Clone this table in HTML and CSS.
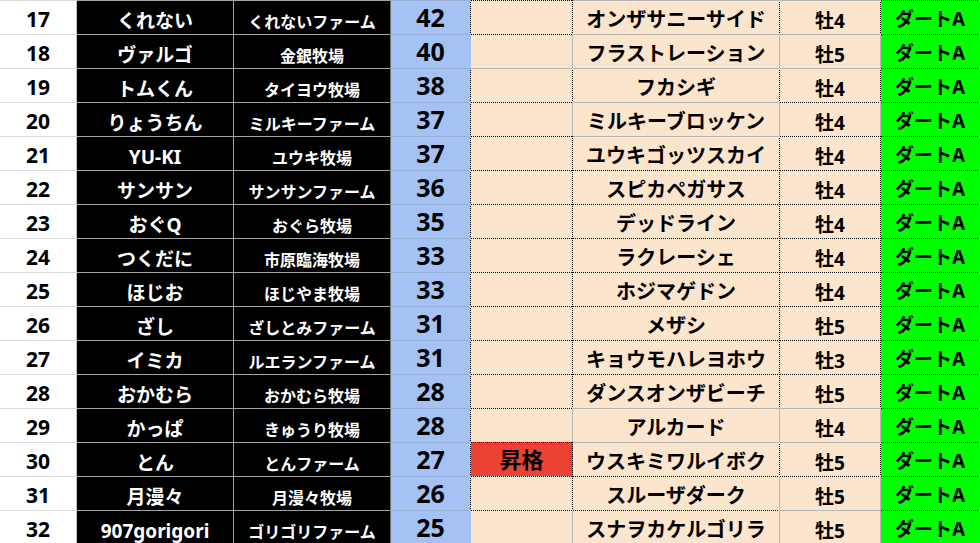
FILE: index.html
```html
<!DOCTYPE html>
<html lang="ja">
<head>
<meta charset="utf-8">
<title>ランキング</title>
<link rel="stylesheet" href="styles.css">
</head>
<body>
<div class="sheet">
  <div class="c num">17</div><div class="c name">くれない</div><div class="c farm">くれないファーム</div><div class="c score dr">42</div><div class="c blank dt dr"></div><div class="c horse dr">オンザサニーサイド</div><div class="c sex dr">牡4</div><div class="c grade dt">ダートA</div>
  <div class="c num">18</div><div class="c name">ヴァルゴ</div><div class="c farm">金銀牧場</div><div class="c score">40</div><div class="c blank dt"></div><div class="c horse">フラストレーション</div><div class="c sex">牡5</div><div class="c grade dt">ダートA</div>
  <div class="c num">19</div><div class="c name">トムくん</div><div class="c farm">タイヨウ牧場</div><div class="c score dr">38</div><div class="c blank dr"></div><div class="c horse dr">フカシギ</div><div class="c sex dr">牡4</div><div class="c grade dt">ダートA</div>
  <div class="c num">20</div><div class="c name">りょうちん</div><div class="c farm">ミルキーファーム</div><div class="c score dr">37</div><div class="c blank dt"></div><div class="c horse">ミルキーブロッケン</div><div class="c sex dt">牡4</div><div class="c grade dt">ダートA</div>
  <div class="c num">21</div><div class="c name">YU-KI</div><div class="c farm">ユウキ牧場</div><div class="c score dr">37</div><div class="c blank dt dr"></div><div class="c horse dr">ユウキゴッツスカイ</div><div class="c sex dt dr">牡4</div><div class="c grade dt">ダートA</div>
  <div class="c num">22</div><div class="c name">サンサン</div><div class="c farm">サンサンファーム</div><div class="c score dr">36</div><div class="c blank dt dr"></div><div class="c horse dt dr">スピカペガサス</div><div class="c sex dt dr">牡4</div><div class="c grade dt">ダートA</div>
  <div class="c num">23</div><div class="c name">おぐQ</div><div class="c farm">おぐら牧場</div><div class="c score dr">35</div><div class="c blank dt dr"></div><div class="c horse dt dr">デッドライン</div><div class="c sex dt dr">牡4</div><div class="c grade dt">ダートA</div>
  <div class="c num">24</div><div class="c name">つくだに</div><div class="c farm">市原臨海牧場</div><div class="c score dr">33</div><div class="c blank dt dr"></div><div class="c horse dt dr">ラクレーシェ</div><div class="c sex dt dr">牡4</div><div class="c grade dt">ダートA</div>
  <div class="c num">25</div><div class="c name">ほじお</div><div class="c farm">ほじやま牧場</div><div class="c score dr">33</div><div class="c blank dt dr"></div><div class="c horse dt dr">ホジマゲドン</div><div class="c sex dt dr">牡4</div><div class="c grade dt">ダートA</div>
  <div class="c num">26</div><div class="c name">ざし</div><div class="c farm">ざしとみファーム</div><div class="c score dr">31</div><div class="c blank dt dr"></div><div class="c horse dt dr">メザシ</div><div class="c sex dt dr">牡5</div><div class="c grade dt">ダートA</div>
  <div class="c num">27</div><div class="c name">イミカ</div><div class="c farm">ルエランファーム</div><div class="c score dr">31</div><div class="c blank dt dr"></div><div class="c horse dt dr">キョウモハレヨホウ</div><div class="c sex dt dr">牡3</div><div class="c grade dt">ダートA</div>
  <div class="c num">28</div><div class="c name">おかむら</div><div class="c farm">おかむら牧場</div><div class="c score dr">28</div><div class="c blank dt dr"></div><div class="c horse dt dr">ダンスオンザビーチ</div><div class="c sex dt dr">牡5</div><div class="c grade dt">ダートA</div>
  <div class="c num">29</div><div class="c name">かっぱ</div><div class="c farm">きゅうり牧場</div><div class="c score dr">28</div><div class="c blank dt"></div><div class="c horse">アルカード</div><div class="c sex">牡4</div><div class="c grade dt">ダートA</div>
  <div class="c num">30</div><div class="c name">とん</div><div class="c farm">とんファーム</div><div class="c score dr">27</div><div class="c blank promo dt dr">昇格</div><div class="c horse dr">ウスキミワルイボク</div><div class="c sex dr">牡5</div><div class="c grade dt">ダートA</div>
  <div class="c num">31</div><div class="c name">月漫々</div><div class="c farm">月漫々牧場</div><div class="c score dr">26</div><div class="c blank dt dr"></div><div class="c horse dt">スルーザダーク</div><div class="c sex dt">牡5</div><div class="c grade dt">ダートA</div>
  <div class="c num">32</div><div class="c name">907gorigori</div><div class="c farm">ゴリゴリファーム</div><div class="c score">25</div><div class="c blank dt"></div><div class="c horse dt">スナヲカケルゴリラ</div><div class="c sex">牡5</div><div class="c grade dt">ダートA</div>
</div>
</body>
</html>
```
FILE: styles.css
```css
html, body {
  margin: 0;
  padding: 0;
  background: #ffffff;
  overflow: hidden;
}

.sheet {
  display: grid;
  grid-template-columns: 77px 157px 157px 80px 102px 207px 101px 99px;
  grid-auto-rows: 34px;
  width: 980px;
  font-family: "Noto Sans", "Noto Sans CJK JP", sans-serif;
  font-weight: 700;
}

.c {
  --t: none;
  --r: none;
  box-sizing: border-box;
  display: flex;
  align-items: flex-end;
  justify-content: center;
  border-top: 1px solid #b7b7b7;
  border-right: 1px solid #b7b7b7;
  background-image: var(--t), var(--r);
  background-size: 2px 1px, 1px 2px;
  background-position: left top, right top;
  background-repeat: repeat-x, repeat-y;
  background-origin: border-box;
  line-height: 1;
  white-space: nowrap;
  overflow: hidden;
  color: #000;
}

.num {
  background-color: #fff;
  font-size: 21px;
  padding-bottom: 4px;
  border-top-color: #dcdcdc;
  border-right-color: #c6c6c6;
}

.name {
  background-color: #000;
  color: #fff;
  font-size: 19px;
  padding-bottom: 3px;
  border-top-color: #a3a3a3;
  border-right-color: #a3a3a3;
}

.farm {
  background-color: #000;
  color: #fff;
  font-size: 16px;
  padding-bottom: 4px;
  border-top-color: #a3a3a3;
  border-right-color: #6d6d6d;
}

.score {
  background-color: #a4c2f4;
  font-size: 25px;
  padding-bottom: 4px;
  border-top-color: #9aafd6;
  border-right-color: #a4c2f4;
}

.blank {
  background-color: #fce5cd;
  font-size: 22px;
  padding-bottom: 6px;
}

.promo {
  background-color: #ea4335;
}

.horse {
  background-color: #fce5cd;
  font-size: 20px;
  padding-bottom: 4px;
}

.sex {
  background-color: #fce5cd;
  font-size: 19px;
  padding-bottom: 3px;
}

.grade {
  background-color: #00ff00;
  font-size: 19px;
  padding-bottom: 5px;
  border-top-color: #00ff00;
  border-right-color: #00ff00;
}

.dt {
  border-top-color: transparent;
  --t: linear-gradient(to right, #000 50%, transparent 50%);
}

.dr {
  border-right-color: transparent;
  --r: linear-gradient(to bottom, #000 50%, transparent 50%);
}
```
